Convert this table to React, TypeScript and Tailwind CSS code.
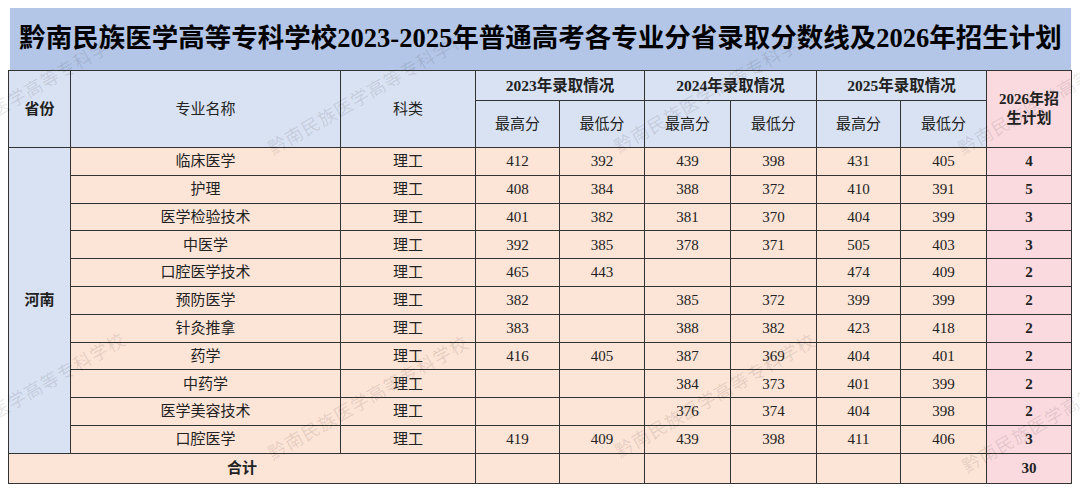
import React from 'react';

interface Row {
  name: string;
  s23: [string, string];
  s24: [string, string];
  s25: [string, string];
  plan: string;
}

const rows: Row[] = [
  { name: '临床医学', s23: ['412', '392'], s24: ['439', '398'], s25: ['431', '405'], plan: '4' },
  { name: '护理', s23: ['408', '384'], s24: ['388', '372'], s25: ['410', '391'], plan: '5' },
  { name: '医学检验技术', s23: ['401', '382'], s24: ['381', '370'], s25: ['404', '399'], plan: '3' },
  { name: '中医学', s23: ['392', '385'], s24: ['378', '371'], s25: ['505', '403'], plan: '3' },
  { name: '口腔医学技术', s23: ['465', '443'], s24: ['', ''], s25: ['474', '409'], plan: '2' },
  { name: '预防医学', s23: ['382', ''], s24: ['385', '372'], s25: ['399', '399'], plan: '2' },
  { name: '针灸推拿', s23: ['383', ''], s24: ['388', '382'], s25: ['423', '418'], plan: '2' },
  { name: '药学', s23: ['416', '405'], s24: ['387', '369'], s25: ['404', '401'], plan: '2' },
  { name: '中药学', s23: ['', ''], s24: ['384', '373'], s25: ['401', '399'], plan: '2' },
  { name: '医学美容技术', s23: ['', ''], s24: ['376', '374'], s25: ['404', '398'], plan: '2' },
  { name: '口腔医学', s23: ['419', '409'], s24: ['439', '398'], s25: ['411', '406'], plan: '3' },
];

// watermark centres, the school name repeated over the sheet
const marks = [
  { x: 25, y: 92 },
  { x: 368, y: 92 },
  { x: 714, y: 90 },
  { x: 1058, y: 92 },
  { x: 25, y: 394 },
  { x: 368, y: 397 },
  { x: 715, y: 395 },
  { x: 1062, y: 410 },
];

const serif = { fontFamily: '"Liberation Serif", "Noto Sans CJK SC", serif' };

export default function App() {
  return (
    <div className="relative w-[1080px] h-[493px] overflow-hidden bg-white text-[#222]" style={serif}>
      <div className="pl-[8px] pt-[8px]">
        <div className="ml-[2px] w-[1061px] h-[62px] bg-[#b4c6e7] flex items-center justify-center">
          <h1 className="text-[26.5px] font-bold text-black whitespace-nowrap">
            黔南民族医学高等专科学校2023-2025年普通高考各专业分省录取分数线及2026年招生计划
          </h1>
        </div>

        <table className="table-fixed border-collapse w-[1063px] text-[15px] text-center">
          <colgroup>
            <col className="w-[62px]" />
            <col className="w-[270px]" />
            <col className="w-[135px]" />
            <col className="w-[84px]" />
            <col className="w-[85px]" />
            <col className="w-[86px]" />
            <col className="w-[86px]" />
            <col className="w-[84px]" />
            <col className="w-[86px]" />
            <col className="w-[85px]" />
          </colgroup>
          <thead>
            <tr className="h-[30px] bg-[#d9e2f3]">
              <th rowSpan={2} className="border border-[#333] font-bold">省份</th>
              <th rowSpan={2} className="border border-[#333] font-normal">专业名称</th>
              <th rowSpan={2} className="border border-[#333] font-normal">科类</th>
              <th colSpan={2} className="border border-[#333] font-bold text-[15.5px]">2023年录取情况</th>
              <th colSpan={2} className="border border-[#333] font-bold text-[15.5px]">2024年录取情况</th>
              <th colSpan={2} className="border border-[#333] font-bold text-[15.5px]">2025年录取情况</th>
              <th rowSpan={2} className="border border-[#333] bg-[#fadadf] font-bold leading-[19px] px-[6px]">
                2026年招生计划
              </th>
            </tr>
            <tr className="h-[47px] bg-[#d9e2f3]">
              <th className="border border-[#333] font-normal">最高分</th>
              <th className="border border-[#333] font-normal">最低分</th>
              <th className="border border-[#333] font-normal">最高分</th>
              <th className="border border-[#333] font-normal">最低分</th>
              <th className="border border-[#333] font-normal">最高分</th>
              <th className="border border-[#333] font-normal">最低分</th>
            </tr>
          </thead>
          <tbody>
            {rows.map((r, i) => (
              <tr key={r.name + i} className="h-[27.8px] bg-[#fce4d6]">
                {i === 0 && (
                  <td rowSpan={rows.length} className="border border-[#333] bg-[#d9e2f3] font-bold">
                    河南
                  </td>
                )}
                <td className="border border-[#333]">{r.name}</td>
                <td className="border border-[#333]">理工</td>
                <td className="border border-[#333]">{r.s23[0]}</td>
                <td className="border border-[#333]">{r.s23[1]}</td>
                <td className="border border-[#333]">{r.s24[0]}</td>
                <td className="border border-[#333]">{r.s24[1]}</td>
                <td className="border border-[#333]">{r.s25[0]}</td>
                <td className="border border-[#333]">{r.s25[1]}</td>
                <td className="border border-[#333] bg-[#fadadf] font-bold">{r.plan}</td>
              </tr>
            ))}
            <tr className="h-[30px] bg-[#fce4d6]">
              <td colSpan={3} className="border border-[#333] font-bold">合计</td>
              <td className="border border-[#333]"></td>
              <td className="border border-[#333]"></td>
              <td className="border border-[#333]"></td>
              <td className="border border-[#333]"></td>
              <td className="border border-[#333]"></td>
              <td className="border border-[#333]"></td>
              <td className="border border-[#333] bg-[#fadadf] font-bold">30</td>
            </tr>
          </tbody>
        </table>
      </div>

      {marks.map((m, i) => (
        <div
          key={i}
          className="pointer-events-none absolute whitespace-nowrap text-[18px] tracking-[1px] text-black/10"
          style={{
            left: m.x,
            top: m.y,
            transform: 'translate(-50%, -50%) rotate(-30deg)',
            fontFamily: '"Noto Sans CJK SC", sans-serif',
          }}
        >
          黔南民族医学高等专科学校
        </div>
      ))}
    </div>
  );
}
